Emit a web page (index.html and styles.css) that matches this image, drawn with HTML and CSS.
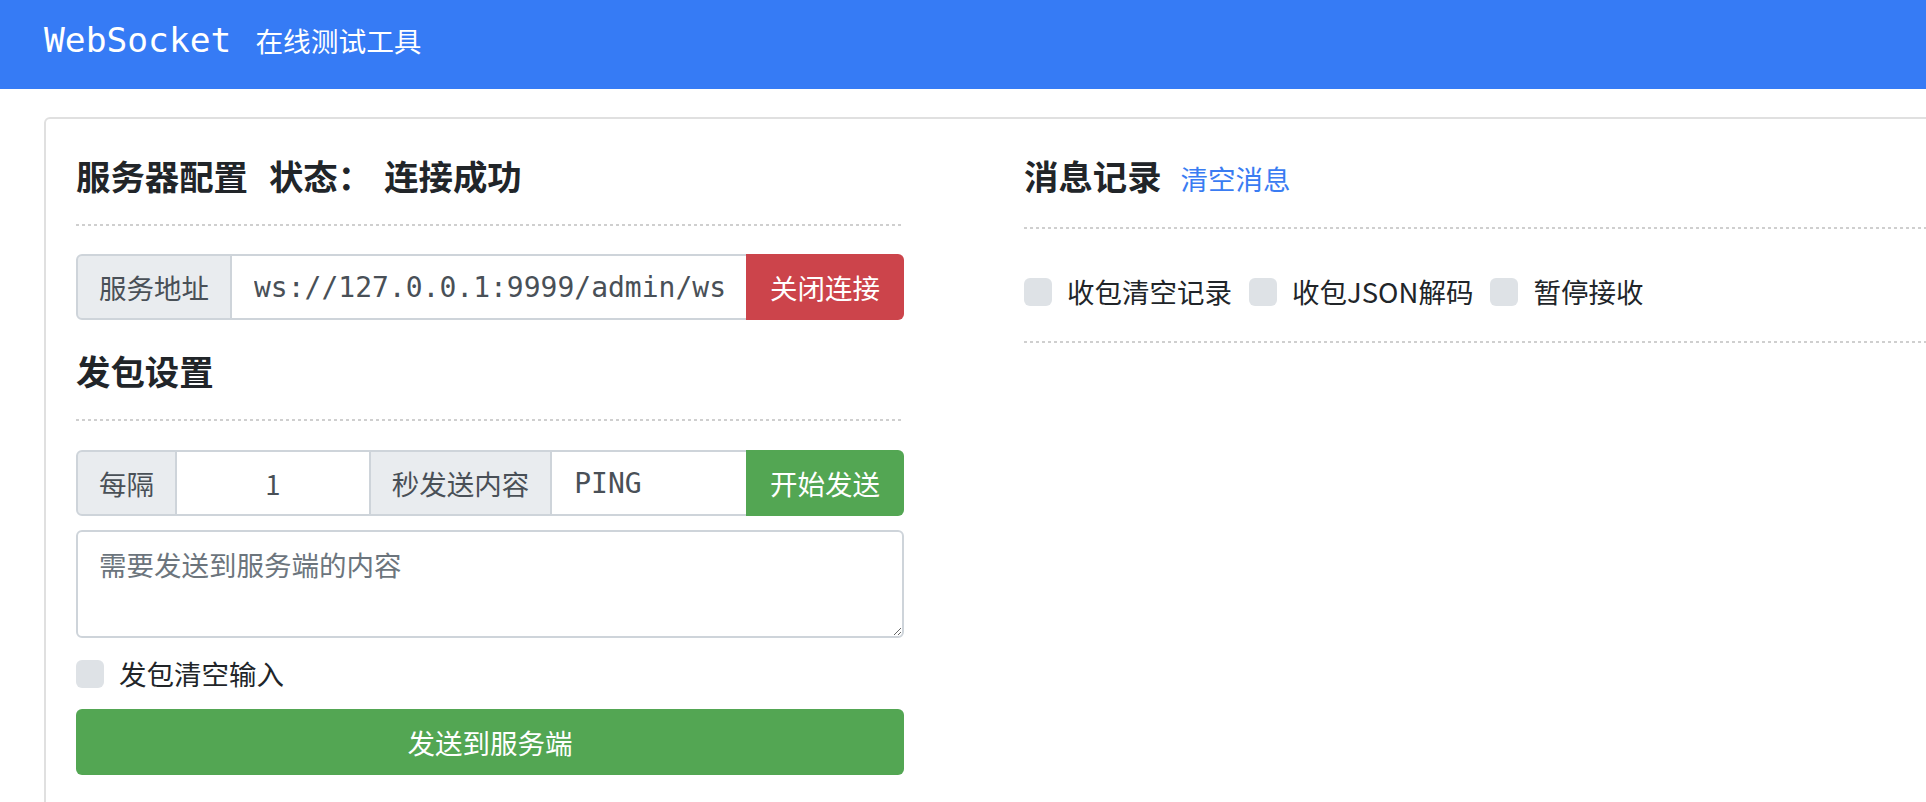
FILE: index.html
```html
<!DOCTYPE html>
<html lang="zh-CN">
<head>
<meta charset="utf-8">
<title>WebSocket 在线测试工具</title>
<link rel="stylesheet" href="styles.css">
</head>
<body>
<header class="topbar">
  <span class="brand">WebSocket</span>
  <span class="brand-sub">在线测试工具</span>
</header>
<main class="page">
  <section class="card">
    <div class="col col-left">
      <h2 class="sec-title"><span>服务器配置</span><span class="status">状态：</span><span class="status-val">连接成功</span></h2>
      <div class="dash"></div>
      <div class="igroup">
        <span class="ig-label ig-first">服务地址</span>
        <input class="ig-input mono" type="text" value="ws://127.0.0.1:9999/admin/ws">
        <button class="ig-btn btn-red" type="button">关闭连接</button>
      </div>
      <h2 class="sec-title sec-gap">发包设置</h2>
      <div class="dash"></div>
      <div class="igroup igroup-2">
        <span class="ig-label ig-first">每隔</span>
        <input class="ig-input ig-center" type="text" value="1">
        <span class="ig-label">秒发送内容</span>
        <input class="ig-input mono" type="text" value="PING">
        <button class="ig-btn btn-green" type="button">开始发送</button>
      </div>
      <textarea class="msg" placeholder="需要发送到服务端的内容"></textarea>
      <label class="check check-left"><input type="checkbox" class="box"><span class="check-text">发包清空输入</span></label>
      <button class="send" type="button">发送到服务端</button>
    </div>
    <div class="col col-right">
      <h2 class="sec-title"><span>消息记录</span><a class="link" href="#">清空消息</a></h2>
      <div class="dash"></div>
      <div class="checks">
        <label class="check"><input type="checkbox" class="box"><span class="check-text">收包清空记录</span></label>
        <label class="check"><input type="checkbox" class="box"><span class="check-text">收包JSON解码</span></label>
        <label class="check"><input type="checkbox" class="box"><span class="check-text">暂停接收</span></label>
      </div>
      <div class="dash dash-bottom"></div>
    </div>
  </section>
</main>
</body>
</html>
```

FILE: styles.css
```css
html, body {
  margin: 0;
  padding: 0;
  overflow: hidden;
  background: #ffffff;
}

body {
  font-family: "Noto Sans CJK SC", "Noto Sans", sans-serif;
  font-size: 27.5px;
  color: #212529;
}

.topbar {
  box-sizing: border-box;
  height: 89px;
  background: #367bf5;
  color: #ffffff;
  display: flex;
  align-items: baseline;
  padding: 23px 0 0 44px;
}

.brand {
  font-family: "DejaVu Sans Mono", monospace;
  font-size: 34.6px;
  line-height: 1;
}

.brand-sub {
  margin-left: 24px;
  font-size: 27.7px;
  line-height: 1;
}

.page {
  padding: 28px 0 0 44px;
  overflow: hidden;
}

.card {
  margin-right: -80px;
  border: 2px solid #e0e0e0;
  border-radius: 6px;
  padding: 36px 0 120px 30px;
  display: grid;
  grid-template-columns: 828px 1fr;
  column-gap: 120px;
}

.col {
  display: flex;
  flex-direction: column;
  min-width: 0;
}

.sec-title {
  margin: 0;
  font-size: 34.4px;
  line-height: 41px;
  font-weight: 700;
  color: #212529;
  white-space: nowrap;
}

.status {
  margin-left: 21px;
}

.status-val {
  margin-left: 12px;
}

.sec-gap {
  margin-top: 30px;
}

.link {
  margin-left: 19px;
  font-size: 27.5px;
  font-weight: 400;
  color: #3a7cf2;
  text-decoration: none;
}

.dash {
  margin-top: 28px;
  height: 2px;
  background: repeating-linear-gradient(90deg, #cfcfcf 0 3px, transparent 3px 6px);
}

.igroup {
  margin-top: 28px;
  height: 66px;
  display: flex;
}

.igroup-2 {
  margin-top: 29px;
}

.ig-label {
  box-sizing: border-box;
  display: flex;
  align-items: center;
  padding: 0 21px;
  background: #e9ecef;
  border: 2px solid #ced4da;
  margin-left: -2px;
  color: #495057;
  font-size: 27.5px;
  white-space: nowrap;
  flex-shrink: 0;
}

.ig-first {
  margin-left: 0;
  border-radius: 6px 0 0 6px;
}

.ig-input {
  box-sizing: border-box;
  flex: 1 1 0;
  min-width: 0;
  height: 100%;
  margin: 0 0 0 -2px;
  padding: 0 20px 0 22px;
  border: 2px solid #ced4da;
  background: #ffffff;
  color: #495057;
  font-family: "Noto Sans CJK SC", "Noto Sans", sans-serif;
  font-size: 27.5px;
  outline: none;
}

.mono {
  font-family: "DejaVu Sans Mono", monospace;
  font-size: 28px;
}

.ig-center {
  text-align: center;
  padding: 0 20px;
}

.ig-btn {
  flex-shrink: 0;
  margin: 0 0 0 -2px;
  padding: 0 24px;
  border: none;
  border-radius: 0 6px 6px 0;
  color: #ffffff;
  font-family: "Noto Sans CJK SC", "Noto Sans", sans-serif;
  font-size: 27.5px;
  white-space: nowrap;
}

.btn-red {
  background: #cc444b;
}

.btn-green {
  background: #53a653;
}

.msg {
  box-sizing: border-box;
  display: block;
  width: 100%;
  height: 108px;
  margin: 14px 0 0 0;
  padding: 12px 21px;
  border: 2px solid #ced4da;
  border-radius: 6px;
  font-family: "Noto Sans CJK SC", "Noto Sans", sans-serif;
  font-size: 27.5px;
  line-height: 1.5;
  color: #495057;
  outline: none;
}

.msg::placeholder {
  color: #6c757d;
}

.check {
  display: flex;
  align-items: center;
  gap: 15px;
  height: 28px;
  font-size: 27.5px;
  color: #212529;
  white-space: nowrap;
}

.check-text {
  line-height: 22px;
  padding-bottom: 3px;
}

.check-left {
  margin-top: 22px;
}

.box {
  appearance: none;
  -webkit-appearance: none;
  width: 28px;
  height: 28px;
  margin: 0;
  border-radius: 6px;
  background: #dee2e6;
  flex-shrink: 0;
}

.send {
  margin-top: 21px;
  height: 66px;
  width: 100%;
  border: none;
  border-radius: 6px;
  background: #53a653;
  color: #ffffff;
  font-family: "Noto Sans CJK SC", "Noto Sans", sans-serif;
  font-size: 27.5px;
}

.checks {
  margin-top: 49px;
  display: flex;
  gap: 17px;
}

.dash-bottom {
  margin-top: 35px;
}
```
